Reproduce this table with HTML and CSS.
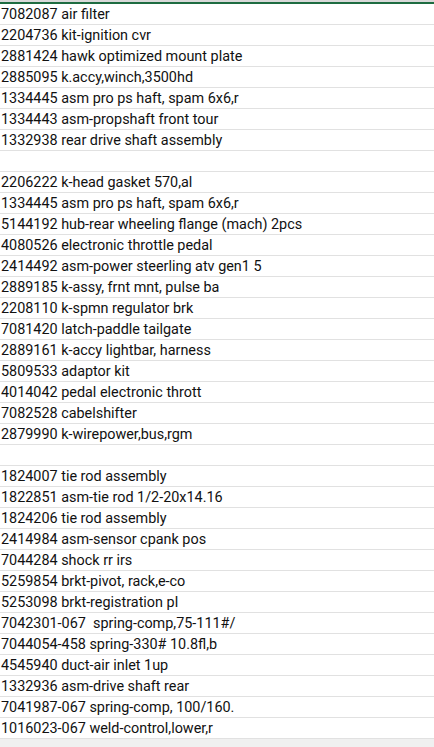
FILE: index.html
```html
<!DOCTYPE html>
<html>
<head>
<meta charset="utf-8">
<link rel="stylesheet" href="styles.css">
</head>
<body>
<div class="sheet">
  <div class="topbar"></div>
  <div class="rows">
    <div class="cell">7082087 air filter</div>
    <div class="cell">2204736 kit-ignition cvr</div>
    <div class="cell">2881424 hawk optimized mount plate</div>
    <div class="cell">2885095 k.accy,winch,3500hd</div>
    <div class="cell">1334445 asm pro ps haft, spam 6x6,r</div>
    <div class="cell">1334443 asm-propshaft front tour</div>
    <div class="cell">1332938 rear drive shaft assembly</div>
    <div class="cell"></div>
    <div class="cell">2206222 k-head gasket 570,al</div>
    <div class="cell">1334445 asm pro ps haft, spam 6x6,r</div>
    <div class="cell">5144192 hub-rear wheeling flange (mach) 2pcs</div>
    <div class="cell">4080526 electronic throttle pedal</div>
    <div class="cell">2414492 asm-power steerling atv gen1 5</div>
    <div class="cell">2889185 k-assy, frnt mnt, pulse ba</div>
    <div class="cell">2208110 k-spmn regulator brk</div>
    <div class="cell">7081420 latch-paddle tailgate</div>
    <div class="cell">2889161 k-accy lightbar, harness</div>
    <div class="cell">5809533 adaptor kit</div>
    <div class="cell">4014042 pedal electronic thrott</div>
    <div class="cell">7082528 cabelshifter</div>
    <div class="cell">2879990 k-wirepower,bus,rgm</div>
    <div class="cell"></div>
    <div class="cell">1824007 tie rod assembly</div>
    <div class="cell">1822851 asm-tie rod 1/2-20x14.16</div>
    <div class="cell">1824206 tie rod assembly</div>
    <div class="cell">2414984 asm-sensor cpank pos</div>
    <div class="cell">7044284 shock rr irs</div>
    <div class="cell">5259854 brkt-pivot, rack,e-co</div>
    <div class="cell">5253098 brkt-registration pl</div>
    <div class="cell">7042301-067 &nbsp;spring-comp,75-111#/</div>
    <div class="cell">7044054-458 spring-330# 10.8fl,b</div>
    <div class="cell">4545940 duct-air inlet 1up</div>
    <div class="cell">1332936 asm-drive shaft rear</div>
    <div class="cell">7041987-067 spring-comp, 100/160.</div>
    <div class="cell">1016023-067 weld-control,lower,r</div>
  </div>
  <div class="footer"></div>
</div>
</body>
</html>
```
FILE: styles.css
```css
html, body {
  margin: 0;
  padding: 0;
  background: #f0f0f0;
}
.sheet {
  width: 434px;
  height: 747px;
  display: flex;
  flex-direction: column;
  overflow: hidden;
}
.topbar {
  height: 2px;
  background: #d9d9d9;
  border-bottom: 2px solid #1e6c41;
}
.rows {
  background: #ffffff;
  display: flex;
  flex-direction: column;
}
.cell {
  height: 20px;
  border-bottom: 1px solid #e1e1e1;
  font-family: Roboto, "Noto Sans", sans-serif;
  font-size: 14.4px;
  line-height: 22px;
  padding-left: 1px;
  color: #111;
  white-space: nowrap;
  overflow: hidden;
}
.footer {
  flex: 1;
  background: #f0f0f0;
}
```
